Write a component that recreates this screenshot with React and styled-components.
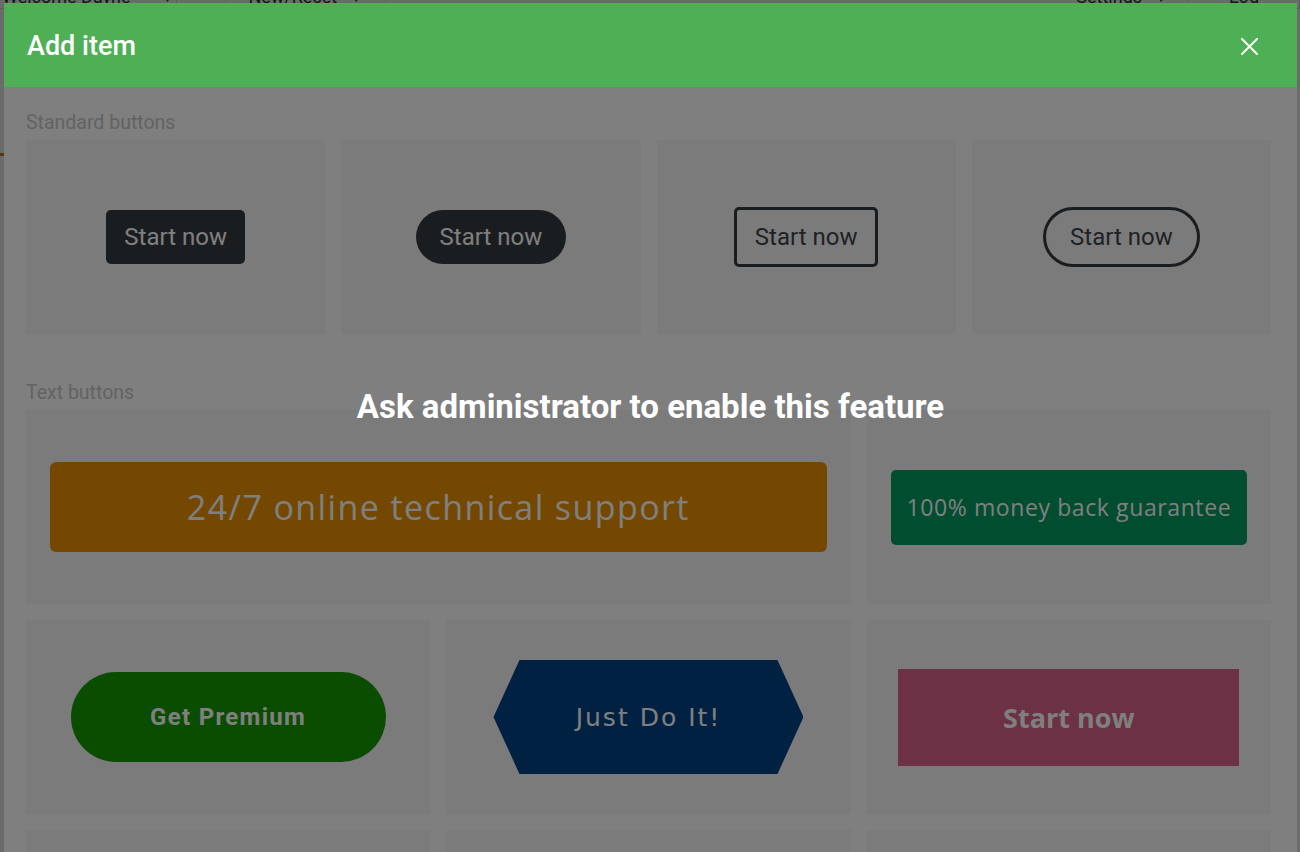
import React from "react";
import styled, { createGlobalStyle, css } from "styled-components";

const GlobalStyle = createGlobalStyle`
  html, body {
    margin: 0;
    padding: 0;
    background: #ffffff;
    font-family: Roboto, "Liberation Sans", Arial, sans-serif;
    overflow: hidden;
  }
  * {
    box-sizing: border-box;
  }
`;

/* page behind the dialog */
const Page = styled.div`
  width: 100vw;
  height: 100vh;
`;

const TopNav = styled.div`
  display: flex;
  align-items: center;
  height: 24px;
  margin-top: -15px;
  border-bottom: 1px solid #dddddd;
  font-size: 18px;
  color: #333333;
`;

const NavItem = styled.div`
  display: flex;
  align-items: center;
  gap: ${(p) => p.$gap || 14}px;
  height: 100%;
  padding: 0 ${(p) => p.$pad || 16}px;
  border-right: 1px solid #dddddd;
  margin-left: ${(p) => (p.$push ? "auto" : "0")};
  white-space: nowrap;
`;

const Caret = styled.span`
  font-size: 14px;
`;

const PageStrip = styled.div`
  height: 3px;
  margin-top: 144px;
  width: 60px;
  background: #e07a10;
`;

const Backdrop = styled.div`
  position: fixed;
  inset: 0;
  background: rgba(0, 0, 0, 0.58);
`;

/* dialog */
const Dialog = styled.div`
  position: fixed;
  top: 3px;
  left: 4px;
  right: 3px;
  bottom: 0;
  display: flex;
  flex-direction: column;
  background: #ffffff;
  overflow: hidden;
`;

const DialogHeader = styled.div`
  flex: 0 0 84px;
  background: #4faf55;
  display: flex;
  align-items: center;
  justify-content: space-between;
  padding: 2px 39px 0 23px;
`;

const DialogTitle = styled.h2`
  margin: 0;
  color: #ffffff;
  font-size: 27px;
  font-weight: 500;
`;

const CloseButton = styled.button`
  border: 0;
  padding: 0;
  background: none;
  display: flex;
  cursor: pointer;
`;

const DialogBody = styled.div`
  position: relative;
  flex: 1;
  padding: 25px 26px 0 22px;
  overflow: hidden;
`;

const SectionLabel = styled.div`
  font-size: 19.5px;
  line-height: 22px;
  color: #c6c6c6;
  margin: ${(p) => (p.$first ? "0" : "48px")} 0 6px;
`;

const CardGrid = styled.div`
  display: grid;
  grid-template-columns: repeat(${(p) => p.$cols}, 1fr);
  grid-auto-rows: 194px;
  gap: 16px;
`;

const Card = styled.div`
  background: #f6f6f6;
  display: flex;
  align-items: center;
  justify-content: center;
  padding: 0 24px;
  grid-column: span ${(p) => p.$span || 1};
`;

/* standard buttons */
const StdButton = styled.div`
  display: flex;
  align-items: center;
  justify-content: center;
  font-family: Roboto, sans-serif;
  font-size: 24px;
  height: ${(p) => (p.$outline ? 60 : 54)}px;
  padding: 0 ${(p) => (p.$pill ? 24 : 18)}px;
  border-radius: ${(p) => (p.$pill ? "30px" : "5px")};
  ${(p) =>
    p.$outline
      ? css`
          border: 3px solid #343a40;
          color: #3f454b;
          background: transparent;
        `
      : css`
          background: #343a40;
          color: #ffffff;
        `}
`;

/* text buttons */
const SupportButton = styled.div`
  flex: 1;
  height: 90px;
  border-radius: 6px;
  background: #e89000;
  color: #ffffff;
  display: flex;
  align-items: center;
  justify-content: center;
  font-family: "Open Sans", sans-serif;
  font-size: 34px;
  letter-spacing: 1.4px;
`;

const GuaranteeButton = styled.div`
  flex: 1;
  height: 75px;
  border-radius: 5px;
  background: #009a60;
  color: #ffffff;
  display: flex;
  align-items: center;
  justify-content: center;
  font-family: "Open Sans", sans-serif;
  font-size: 23px;
  letter-spacing: 0.6px;
`;

const PremiumButton = styled.div`
  width: 315px;
  height: 90px;
  border-radius: 45px;
  background: #149a00;
  color: #ffffff;
  display: flex;
  align-items: center;
  justify-content: center;
  font-family: Roboto, sans-serif;
  font-weight: 700;
  font-size: 24px;
  letter-spacing: 1.3px;
`;

const HexButton = styled.div`
  width: 310px;
  height: 114px;
  background: #004284;
  clip-path: polygon(26px 0, calc(100% - 26px) 0, 100% 50%, calc(100% - 26px) 100%, 26px 100%, 0 50%);
  color: #ffffff;
  display: flex;
  align-items: center;
  justify-content: center;
  font-family: "DejaVu Sans", sans-serif;
  font-size: 25px;
  letter-spacing: 2px;
`;

const BlockButton = styled.div`
  width: 341px;
  height: 97px;
  background: #d8628a;
  color: #ffffff;
  display: flex;
  align-items: center;
  justify-content: center;
  font-family: "Open Sans", sans-serif;
  font-weight: 700;
  font-size: 27px;
`;

/* lock layer */
const LockLayer = styled.div`
  position: absolute;
  inset: 0;
  background: rgba(0, 0, 0, 0.5);
  padding-top: 299px;
  text-align: center;
  color: #ffffff;
  font-size: 33px;
  font-weight: 700;
  line-height: 42px;
`;

const CloseIcon = () => (
  <svg width="17" height="17" viewBox="0 0 17 17">
    <path d="M1 1 L16 16 M16 1 L1 16" stroke="#ffffff" strokeWidth="2" strokeLinecap="round" />
  </svg>
);

const standardButtons = [
  { pill: false, outline: false },
  { pill: true, outline: false },
  { pill: false, outline: true },
  { pill: true, outline: true },
];

const App = () => {
  return (
    <>
      <GlobalStyle />
      <Page>
        <TopNav>
          <NavItem $pad={2} $gap={30}>
            Welcome Dayne <Caret>▼</Caret>
          </NavItem>
          <NavItem $pad={24}></NavItem>
          <NavItem $pad={22} $gap={12}>
            New/Reset <Caret>▼</Caret>
          </NavItem>
          <NavItem $push $pad={20} $gap={12}>
            Settings <Caret>▼</Caret>
          </NavItem>
          <NavItem $pad={40}>Log</NavItem>
        </TopNav>
        <PageStrip />
      </Page>
      <Backdrop />
      <Dialog>
        <DialogHeader>
          <DialogTitle>Add item</DialogTitle>
          <CloseButton aria-label="Close">
            <CloseIcon />
          </CloseButton>
        </DialogHeader>
        <DialogBody>
          <SectionLabel $first>Standard buttons</SectionLabel>
          <CardGrid $cols={4}>
            {standardButtons.map((b, i) => (
              <Card key={i}>
                <StdButton $pill={b.pill} $outline={b.outline}>
                  Start now
                </StdButton>
              </Card>
            ))}
          </CardGrid>

          <SectionLabel>Text buttons</SectionLabel>
          <CardGrid $cols={3}>
            <Card $span={2}>
              <SupportButton>24/7 online technical support</SupportButton>
            </Card>
            <Card>
              <GuaranteeButton>100% money back guarantee</GuaranteeButton>
            </Card>
            <Card>
              <PremiumButton>Get Premium</PremiumButton>
            </Card>
            <Card>
              <HexButton>Just Do It!</HexButton>
            </Card>
            <Card>
              <BlockButton>Start now</BlockButton>
            </Card>
            <Card />
            <Card />
            <Card />
          </CardGrid>

          <LockLayer>Ask administrator to enable this feature</LockLayer>
        </DialogBody>
      </Dialog>
    </>
  );
};

export default App;
